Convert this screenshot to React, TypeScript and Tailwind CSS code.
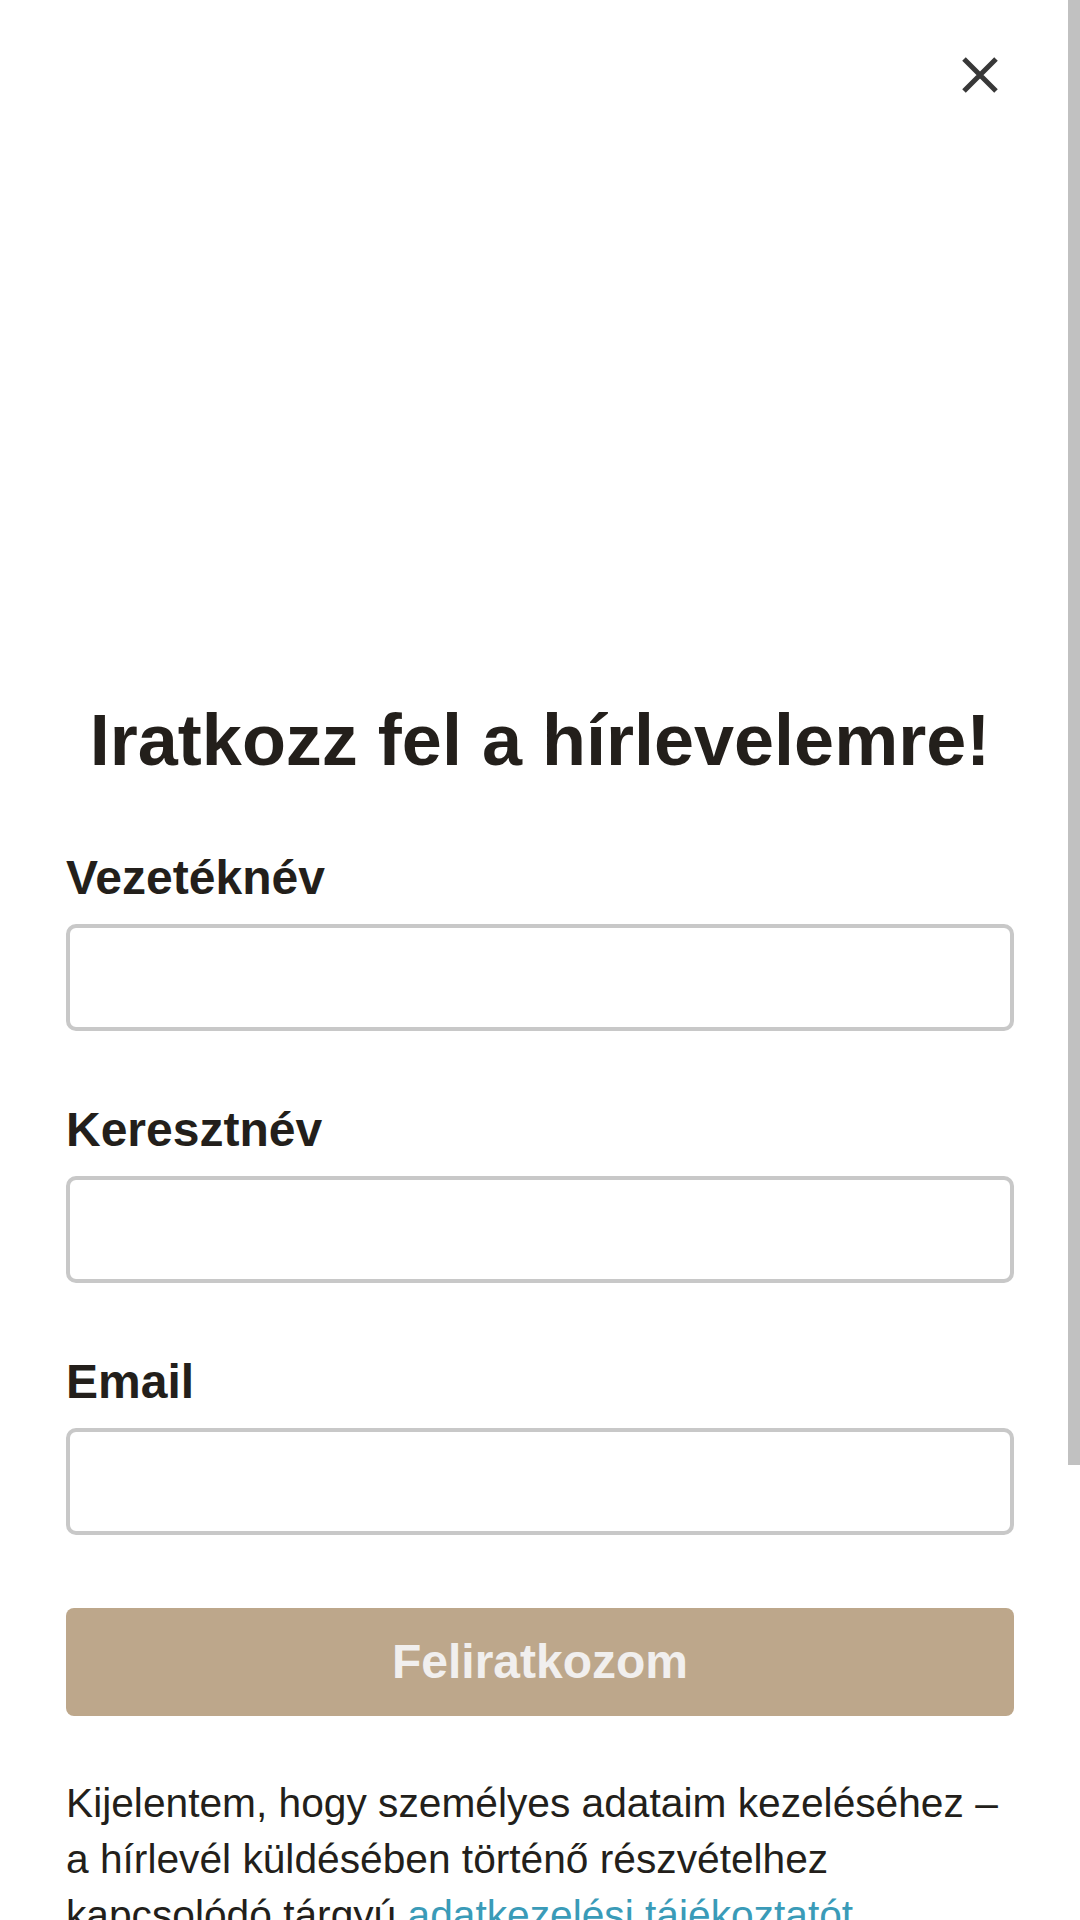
import React from "react";

/** --- Signup field: label + bordered input --- **/
const Field: React.FC<{ label: string; type?: string; first?: boolean }> = ({ label, type = "text", first }) => (
  <div className={first ? "" : "mt-[73px]"}>
    <label className="block text-[48px] font-bold leading-[52px] text-[#231f1b]">{label}</label>
    <input
      type={type}
      className="mt-[20px] block h-[107px] w-full rounded-[10px] border-4 border-[#c8c8c8] bg-white px-4 text-[40px] outline-none"
    />
  </div>
);

export default function App() {
  return (
    <div className="relative h-[1920px] overflow-hidden bg-white font-['Liberation_Sans',Arial,sans-serif] text-[#231f1b]">
      {/* close */}
      <button className="absolute left-[962px] top-[57px] h-[36px] w-[36px]" aria-label="Bezárás">
        <svg viewBox="0 0 36 36" className="h-full w-full">
          <path d="M2 2 L34 34 M34 2 L2 34" stroke="#383838" strokeWidth="5" fill="none" />
        </svg>
      </button>

      {/* scrollbar thumb */}
      <div className="absolute right-0 top-0 h-[1465px] w-[12px] bg-[#c1c1c1]" />

      <div className="px-[66px] pt-[699px]">
        <h1 className="text-center text-[72px] font-bold leading-[1.15]">Iratkozz fel a hírlevelemre!</h1>

        <form className="mt-[70px]" onSubmit={e => e.preventDefault()}>
          <Field label="Vezetéknév" first />
          <Field label="Keresztnév" />
          <Field label="Email" type="email" />

          <button
            type="submit"
            className="mt-[73px] block h-[108px] w-full rounded-[8px] bg-[#bda78b] text-[48px] font-bold leading-[1.15] text-[#f1efee]"
          >
            Feliratkozom
          </button>

          <p className="mt-[59px] text-[40.7px] leading-[56px]">
            Kijelentem, hogy személyes adataim kezeléséhez – a hírlevél küldésében történő részvételhez kapcsolódó tárgyú{" "}
            <a href="#" className="text-[#3a9bb8]">adatkezelési tájékoztatót</a> megismertem, és hozzájárulok adataim
            kezeléséhez.
          </p>
        </form>
      </div>
    </div>
  );
}
